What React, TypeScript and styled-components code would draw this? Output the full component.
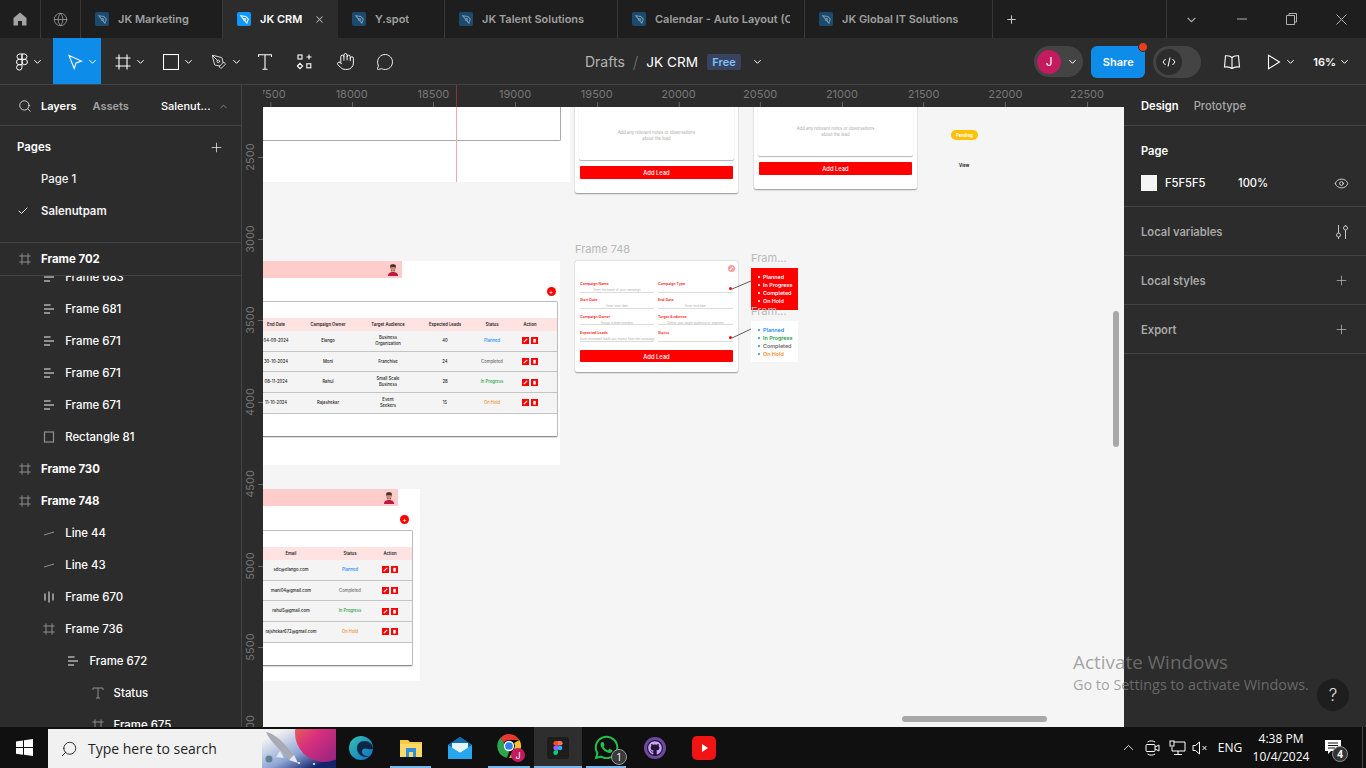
import React from 'react';
import styled, { createGlobalStyle, css } from 'styled-components';
import { ChevronUp, Check, Eye, Globe, Hand, MessageCircle, PenTool, Plus, Search, X } from 'lucide-react';
import { FaGithub, FaWhatsapp } from 'react-icons/fa';

const GlobalStyle = createGlobalStyle`
    html, body {
        margin: 0;
        padding: 0;
        width: 1366px;
        height: 768px;
        overflow: hidden;
        background: #2c2c2c;
        font-family: 'Inter', 'Liberation Sans', sans-serif;
    }
    * { box-sizing: border-box; }
`;

const AppShell = styled.div`
    position: relative;
    width: 1366px;
    height: 768px;
    display: flex;
    flex-direction: column;
    overflow: hidden;
`;

/* ---------- browser tabs ---------- */
const TabBar = styled.div`
    height: 38px;
    display: flex;
    background: #1e1e1e;
    flex-shrink: 0;
`;
const IconTab = styled.div`
    width: 40.5px;
    display: flex;
    align-items: center;
    justify-content: center;
    color: #a3a3a3;
    border-right: 1px solid #383838;
`;
const FileTab = styled.div<{ $w: number; $active?: boolean }>`
    width: ${p => p.$w}px;
    display: flex;
    align-items: center;
    padding: 0 ${p => (p.$active ? 8 : 14)}px 0 14px;
    gap: 9px;
    font-size: 11px;
    font-weight: 600;
    white-space: nowrap;
    color: ${p => (p.$active ? '#ffffff' : '#a0a0a0')};
    background: ${p => (p.$active ? '#2c2c2c' : 'transparent')};
    border-right: 1px solid ${p => (p.$active ? '#2c2c2c' : '#383838')};
`;
const TabTitle = styled.span`
    min-width: 0;
    overflow: hidden;
`;
const TabClose = styled.span`
    display: flex;
    margin-left: 3px;
    color: #b5b5b5;
`;
const TabFileBadge = styled.span<{ $active?: boolean }>`
    width: 14px;
    height: 14px;
    flex-shrink: 0;
    border-radius: 2px;
    display: flex;
    align-items: center;
    justify-content: center;
    background: ${p => (p.$active ? '#0d99ff' : '#1a4a6e')};
    color: ${p => (p.$active ? '#ffffff' : '#7b98ad')};
`;
const NewTab = styled.div`
    width: 36px;
    display: flex;
    align-items: center;
    justify-content: center;
    color: #c8c8c8;
`;
const WindowControls = styled.div`
    margin-left: auto;
    width: 200px;
    display: flex;
    border-left: 1px solid #383838;
    color: #b0b0b0;
`;
const WindowButton = styled.div`
    width: 50px;
    display: flex;
    align-items: center;
    justify-content: center;
`;

/* ---------- figma toolbar ---------- */
const ToolBar = styled.div`
    height: 47px;
    display: flex;
    align-items: stretch;
    background: #2c2c2c;
    border-bottom: 1px solid #444444;
    color: #ffffff;
    flex-shrink: 0;
`;
const ToolButton = styled.div<{ $w?: number; $active?: boolean; $plain?: boolean }>`
    width: ${p => p.$w ?? 48}px;
    display: flex;
    align-items: center;
    gap: 5px;
    padding-top: 1px;
    padding-left: ${p => (p.$plain ? 0 : 14)}px;
    justify-content: ${p => (p.$plain ? 'center' : 'flex-start')};
    background: ${p => (p.$active ? '#0d8ce9' : 'transparent')};
`;
const LogoButton = styled(ToolButton)`
    padding-left: 16px;
`;
const TitleGroup = styled.div`
    margin-left: 180px;
    padding-top: 1px;
    display: flex;
    align-items: center;
    font-size: 14px;
`;
const Crumb = styled.span`
    color: #b3b3b3;
`;
const CrumbSlash = styled.span`
    color: #6e6e6e;
    margin: 0 8px 0 8px;
    font-weight: 300;
    font-size: 16px;
`;
const FileTitle = styled.span`
    font-size: 13.6px;
`;
const FreeBadge = styled.span`
    margin-left: 9px;
    margin-right: 12px;
    width: 34px;
    height: 16px;
    border-radius: 2px;
    background: #394360;
    color: #7cc4f8;
    font-size: 11px;
    font-weight: 600;
    display: flex;
    align-items: center;
    justify-content: center;
`;
const RightTools = styled.div`
    margin-left: auto;
    padding: 1px 17px 0 0;
    display: flex;
    align-items: center;
`;
const UserPill = styled.div`
    width: 49px;
    height: 31px;
    border-radius: 16px;
    background: #444444;
    display: flex;
    align-items: center;
    padding-left: 3px;
    gap: 7px;
`;
const Avatar = styled.span`
    width: 24px;
    height: 24px;
    border-radius: 50%;
    background: #c41a5e;
    font-size: 12px;
    display: flex;
    align-items: center;
    justify-content: center;
`;
const ShareButton = styled.div`
    position: relative;
    margin-left: 8px;
    width: 54px;
    height: 32px;
    border-radius: 6px;
    background: #0d8ce9;
    font-size: 11px;
    font-weight: 600;
    display: flex;
    align-items: center;
    justify-content: center;
`;
const ShareDot = styled.span`
    position: absolute;
    top: -4px;
    right: -3px;
    width: 10px;
    height: 10px;
    border-radius: 50%;
    background: #e8401c;
    border: 1px solid #2c2c2c;
`;
const DevToggle = styled.div`
    margin-left: 8px;
    width: 48px;
    height: 32px;
    border-radius: 16px;
    background: #444444;
    padding: 3px;
`;
const DevKnob = styled.div`
    width: 26px;
    height: 26px;
    border-radius: 50%;
    background: #2c2c2c;
    display: flex;
    align-items: center;
    justify-content: center;
`;
const BookSlot = styled.div`
    display: flex;
    margin-left: 22px;
`;
const PlaySlot = styled.div`
    display: flex;
    align-items: center;
    gap: 5px;
    margin-left: 26px;
`;
const ZoomLabel = styled.div`
    display: flex;
    align-items: center;
    gap: 4px;
    margin-left: 18px;
    font-size: 11px;
    font-weight: 600;
`;

/* ---------- main area ---------- */
const MainRow = styled.div`
    flex: 1;
    min-height: 0;
    display: flex;
`;
const SideBar = styled.aside`
    width: 242px;
    flex-shrink: 0;
    background: #2c2c2c;
    border-right: 1px solid #444444;
    color: #ffffff;
    display: flex;
    flex-direction: column;
    font-size: 11.4px;
    overflow: hidden;
`;
const SideTabs = styled.div`
    height: 41px;
    flex-shrink: 0;
    display: flex;
    align-items: center;
    padding: 2px 0 0 18px;
    border-bottom: 1px solid #444444;
    font-size: 11px;
    font-weight: 600;
    color: #ffffff;
`;
const SideTabActive = styled.span`
    margin-left: 9px;
`;
const SideTabMuted = styled.span`
    margin-left: 16px;
    color: #a3a3a3;
`;
const FileName = styled.span`
    margin-left: 32px;
    font-weight: 500;
`;
const FileChevron = styled(ChevronUp)`
    margin-left: 8px;
    color: #8a8a8a;
`;
const PagesSection = styled.div`
    height: 117px;
    flex-shrink: 0;
    border-bottom: 1px solid #444444;
`;
const PagesHead = styled.div`
    height: 37px;
    display: flex;
    align-items: center;
    justify-content: space-between;
    padding: 5px 17px 0 17px;
    font-weight: 600;
`;
const PageRow = styled.div<{ $current?: boolean }>`
    height: 32px;
    display: flex;
    align-items: center;
    padding-left: 41px;
    position: relative;
    font-weight: ${p => (p.$current ? 600 : 500)};
    color: #f2f2f2;
`;
const PageCheck = styled.span`
    position: absolute;
    left: 17px;
    top: 10px;
    display: flex;
`;
const StickyLayer = styled.div`
    height: 33px;
    flex-shrink: 0;
    border-bottom: 1px solid #444444;
    background: #2c2c2c;
    display: flex;
    align-items: center;
    padding-left: 19px;
    gap: 10px;
    font-weight: 700;
    position: relative;
    z-index: 1;
`;
const LayerList = styled.div`
    flex: 1;
    min-height: 0;
    overflow: hidden;
`;
const LayerScroll = styled.div`
    margin-top: -15px;
`;
const LayerRow = styled.div<{ $level: number; $strong?: boolean }>`
    height: 32px;
    display: flex;
    align-items: center;
    gap: 10px;
    padding-left: ${p => 19 + p.$level * 24.2}px;
    font-weight: ${p => (p.$strong ? 700 : 500)};
    white-space: nowrap;
`;
const LayerGlyph = styled.span`
    width: 12px;
    height: 12px;
    flex-shrink: 0;
    color: #8f8f8f;
    display: flex;
`;

const CenterArea = styled.div`
    width: 882px;
    display: flex;
    flex-direction: column;
    background: #2c2c2c;
`;
const TopRuler = styled.div`
    height: 22px;
    flex-shrink: 0;
    padding-left: 21px;
`;
const RulerTrack = styled.div`
    position: relative;
    height: 100%;
    overflow: hidden;
`;
const RulerLabel = styled.span<{ $x: number }>`
    position: absolute;
    left: ${p => p.$x}px;
    top: 2px;
    transform: translateX(-50%);
    font-size: 11px;
    color: #777777;
    &::after {
        content: '';
        position: absolute;
        left: 50%;
        top: 15px;
        width: 1px;
        height: 5px;
        background: #666666;
    }
`;
const RulerMark = styled.span`
    position: absolute;
    left: 193px;
    top: 0;
    bottom: 0;
    width: 1px;
    background: #7d3a36;
`;
const CanvasRow = styled.div`
    flex: 1;
    min-height: 0;
    display: flex;
`;
const LeftRuler = styled.div`
    position: relative;
    width: 21px;
    flex-shrink: 0;
    overflow: hidden;
`;
const SideRulerLabel = styled.span<{ $y: number }>`
    position: absolute;
    top: ${p => p.$y}px;
    left: 8px;
    transform: translate(-50%, -50%) rotate(-90deg);
    font-size: 11px;
    color: #777777;
`;
const SideRulerTick = styled.span<{ $y: number }>`
    position: absolute;
    top: ${p => p.$y}px;
    right: 0;
    width: 5px;
    height: 1px;
    background: #666666;
`;
const Canvas = styled.div`
    position: relative;
    flex: 1;
    background: #f5f5f5;
    overflow: hidden;
`;

const placed = css<{ $x: number; $y: number }>`
    position: absolute;
    left: ${p => p.$x}px;
    top: ${p => p.$y}px;
`;

const RedGuide = styled.div`
    position: absolute;
    left: 193px;
    top: 0;
    width: 1px;
    height: 75px;
    background: #f0a9a6;
`;
const WhiteFrame = styled.div<{ $x: number; $y: number; $w: number; $h: number }>`
    ${placed};
    width: ${p => p.$w}px;
    height: ${p => p.$h}px;
    background: #ffffff;
    display: flex;
    flex-direction: column;
`;
const ClippedBox = styled.div`
    height: 34px;
    margin-right: 9px;
    border: 1px solid #a8a8a8;
    border-top: none;
    border-left: none;
    border-radius: 0 0 2px 0;
`;
const PinkBar = styled.div<{ $w: number }>`
    width: ${p => p.$w}px;
    height: 17px;
    flex-shrink: 0;
    background: #ffcccc;
    display: flex;
    align-items: center;
    justify-content: flex-end;
    padding-right: 3px;
`;
const PlusRow = styled.div<{ $h: number; $pad: number }>`
    height: ${p => p.$h}px;
    flex-shrink: 0;
    display: flex;
    align-items: center;
    justify-content: flex-end;
    padding: 3px ${p => p.$pad}px 0 0;
`;
const RedPlus = styled.span`
    width: 9px;
    height: 9px;
    border-radius: 50%;
    background: #ff0000;
    color: #ffffff;
    font-size: 7px;
    line-height: 9px;
    text-align: center;
`;
const TableBox = styled.div<{ $right: number }>`
    height: 136px;
    margin-right: ${p => p.$right}px;
    padding-top: 16px;
    border: 1px solid #bdbdbd;
    border-left: none;
    border-bottom: 1px solid #8f8f8f;
    border-radius: 0 2px 2px 0;
    flex-shrink: 0;
    box-shadow: 0 1px 1px rgba(0, 0, 0, 0.15);
`;
const TableRow = styled.div<{ $cols: string; $head?: boolean }>`
    display: grid;
    grid-template-columns: ${p => p.$cols};
    height: ${p => (p.$head ? 13 : 20.7)}px;
    background: ${p => (p.$head ? '#ffe2e2' : '#f4f4f4')};
    border-bottom: ${p => (p.$head ? 'none' : '1px solid #c4c4c4')};
    font-size: 4.2px;
    font-weight: ${p => (p.$head ? 600 : 500)};
    color: #1c1c1c;
`;
const TableCell = styled.div<{ $color?: string }>`
    display: flex;
    align-items: center;
    justify-content: center;
    text-align: center;
    line-height: 6px;
    white-space: nowrap;
    color: ${p => p.$color ?? 'inherit'};
`;
const ActionGroup = styled.div`
    display: flex;
    align-items: center;
    justify-content: center;
    gap: 2px;
`;
const ActionButton = styled.span`
    width: 7px;
    height: 7px;
    background: #ff0000;
    color: #ffffff;
    display: flex;
    align-items: center;
    justify-content: center;
`;

const LeadCard = styled.div<{ $x: number; $y: number; $h: number }>`
    ${placed};
    width: 163px;
    height: ${p => p.$h}px;
    background: #ffffff;
    border-radius: 2px;
    box-shadow: 0 0.5px 1.5px rgba(0, 0, 0, 0.4);
    padding: 0 4px 0 4px;
    display: flex;
    flex-direction: column;
`;
const NotesArea = styled.div<{ $h: number }>`
    height: ${p => p.$h}px;
    flex-shrink: 0;
    border-radius: 2px;
    box-shadow: 0 0.5px 1px rgba(0, 0, 0, 0.3);
    display: flex;
    align-items: center;
    justify-content: center;
    text-align: center;
    font-size: 4.2px;
    line-height: 5.5px;
    color: #a9a9a9;
    padding-top: 14px;
`;
const RedButton = styled.div<{ $gap: number }>`
    margin: ${p => p.$gap}px 1px 0 1px;
    height: 12.5px;
    flex-shrink: 0;
    border-radius: 1px;
    background: #ff0000;
    color: #ffffff;
    font-size: 5.8px;
    font-weight: 500;
    display: flex;
    align-items: center;
    justify-content: center;
`;
const PendingPill = styled.div<{ $x: number; $y: number }>`
    ${placed};
    width: 27px;
    height: 10px;
    border-radius: 5px;
    background: #ffc107;
    color: #ffffff;
    font-size: 4.2px;
    font-weight: 700;
    display: flex;
    align-items: center;
    justify-content: center;
`;
const TinyLink = styled.div<{ $x: number; $y: number }>`
    ${placed};
    font-size: 4.2px;
    font-weight: 700;
    color: #222222;
`;
const FrameLabel = styled.div<{ $x: number; $y: number }>`
    ${placed};
    font-size: 11px;
    color: #b9b9b9;
    white-space: nowrap;
`;
const FormCard = styled(LeadCard)`
    padding: 15.3px 4px 0 4px;
`;
const PencilBadge = styled.span`
    position: absolute;
    top: 3.5px;
    right: 3px;
    width: 7px;
    height: 7px;
    border-radius: 50%;
    background: #ff9a9a;
    display: flex;
    align-items: center;
    justify-content: center;
`;
const FieldGrid = styled.div`
    display: grid;
    grid-template-columns: 74px 75px;
    column-gap: 4px;
    margin-left: 1px;
`;
const Field = styled.div`
    height: 16.4px;
    padding-top: 5.7px;
    border-bottom: 1px solid #dcdcdc;
    position: relative;
`;
const FieldLabel = styled.div`
    font-size: 3.6px;
    line-height: 4px;
    font-weight: 600;
    color: #ff2a2a;
`;
const FieldHint = styled.div`
    margin-top: 2px;
    font-size: 3px;
    line-height: 4px;
    color: #b0b0b0;
    text-align: center;
    white-space: nowrap;
`;
const FieldDot = styled.span`
    position: absolute;
    right: 1px;
    bottom: 1.5px;
    width: 3.5px;
    height: 3.5px;
    border-radius: 50%;
    background: #ff0000;
`;
const StatusBox = styled.ul<{ $x: number; $y: number; $h: number; $red?: boolean }>`
    ${placed};
    margin: 0;
    width: 46.5px;
    height: ${p => p.$h}px;
    padding: 5px 0 0 12px;
    list-style: none;
    background: ${p => (p.$red ? '#ff0000' : '#ffffff')};
    font-size: 5.4px;
    font-weight: 600;
`;
const StatusItem = styled.li<{ $color: string; $dot: string }>`
    position: relative;
    height: 8px;
    line-height: 8px;
    color: ${p => p.$color};
    white-space: nowrap;
    &::before {
        content: '';
        position: absolute;
        left: -5px;
        top: 3px;
        width: 2px;
        height: 2px;
        border-radius: 50%;
        background: ${p => p.$dot};
    }
`;
const Connector = styled.svg`
    position: absolute;
    left: 0;
    top: 0;
    pointer-events: none;
`;
const ScrollThumbH = styled.div`
    position: absolute;
    left: 639px;
    top: 609px;
    width: 145px;
    height: 6px;
    border-radius: 3px;
    background: #a8a8a8;
`;
const ScrollThumbV = styled.div`
    position: absolute;
    left: 850px;
    top: 204px;
    width: 6px;
    height: 136px;
    border-radius: 3px;
    background: #a8a8a8;
`;

/* ---------- right panel ---------- */
const RightPanel = styled.aside`
    position: relative;
    flex: 1;
    background: #2c2c2c;
    color: #ffffff;
    font-size: 11.2px;
`;
const PanelTabs = styled.div`
    height: 41px;
    display: flex;
    align-items: center;
    gap: 15px;
    padding: 2px 0 0 17px;
    border-bottom: 1px solid #444444;
    font-weight: 600;
`;
const PanelTabMuted = styled.span`
    color: #a8a8a8;
    font-weight: 500;
`;
const PageSection = styled.div`
    height: 81px;
    padding: 17px 17px 0 17px;
    border-bottom: 1px solid #444444;
`;
const PageTitle = styled.div`
    font-weight: 600;
    height: 16px;
    line-height: 16px;
`;
const FillRow = styled.div`
    margin-top: 16px;
    display: flex;
    align-items: center;
`;
const Swatch = styled.span`
    width: 16px;
    height: 16px;
    background: #f5f5f5;
`;
const HexValue = styled.span`
    margin-left: 8px;
    width: 73px;
    font-weight: 500;
`;
const PercentValue = styled.span`
    font-weight: 500;
`;
const EyeSlot = styled.span`
    margin-left: auto;
    display: flex;
    color: #f0f0f0;
`;
const PanelSection = styled.div`
    height: 49px;
    display: flex;
    align-items: center;
    justify-content: space-between;
    padding: 1px 17px 0 17px;
    border-bottom: 1px solid #444444;
    color: #a8a8a8;
    font-weight: 600;
`;
const PanelGlyph = styled.span`
    display: flex;
    color: #c4c4c4;
`;
const HelpButton = styled.div`
    position: absolute;
    left: 193px;
    top: 594px;
    width: 32px;
    height: 32px;
    border-radius: 50%;
    background: #1e1e1e;
    color: #e0e0e0;
    font-size: 17px;
    font-weight: 300;
    display: flex;
    align-items: center;
    justify-content: center;
`;
const ActivateNote = styled.div`
    position: absolute;
    left: 1073px;
    top: 650px;
    font-family: 'Open Sans', 'Noto Sans', sans-serif;
    color: rgba(130, 130, 130, 0.72);
    pointer-events: none;
    white-space: nowrap;
`;
const ActivateTitle = styled.div`
    font-size: 18.9px;
    line-height: 24px;
`;
const ActivateText = styled.div`
    font-size: 14.4px;
    line-height: 22px;
`;

/* ---------- windows taskbar ---------- */
const TaskBar = styled.div`
    height: 41px;
    flex-shrink: 0;
    display: flex;
    background: #101010;
    color: #ffffff;
    font-family: 'Open Sans', 'Noto Sans', sans-serif;
`;
const StartButton = styled.div`
    width: 48px;
    display: flex;
    align-items: center;
    justify-content: center;
`;
const SearchBox = styled.div`
    position: relative;
    width: 288px;
    margin-top: 2px;
    background: #f1f1f1;
    color: #1f1f1f;
    display: flex;
    align-items: center;
    padding-left: 12px;
    gap: 10px;
    font-size: 14px;
    overflow: hidden;
    white-space: nowrap;
`;
const MirroredSearch = styled(Search)`
    transform: scaleX(-1);
`;
const SearchArt = styled.svg`
    position: absolute;
    right: 0;
    top: 0;
`;
const AppSlot = styled.div<{ $w: number; $open?: boolean; $active?: boolean }>`
    position: relative;
    width: ${p => p.$w}px;
    display: flex;
    align-items: center;
    justify-content: center;
    background: ${p => (p.$active ? '#2e2e2e' : 'transparent')};
    &::after {
        content: '';
        display: ${p => (p.$open ? 'block' : 'none')};
        position: absolute;
        left: ${p => (p.$active ? 0 : 4)}px;
        right: ${p => (p.$active ? 0 : 4)}px;
        bottom: 0;
        height: 2px;
        background: #76b9ed;
    }
`;
const CountBadge = styled.span`
    position: absolute;
    right: 3px;
    bottom: 3px;
    width: 16px;
    height: 16px;
    border-radius: 50%;
    background: #3a3a3a;
    border: 1px solid #9a9a9a;
    font-size: 10px;
    line-height: 14px;
    text-align: center;
`;
const Tray = styled.div`
    margin-left: auto;
    margin-right: 3px;
    padding-right: 6px;
    display: flex;
    align-items: center;
    border-right: 1px solid #4a4a4a;
`;
const TraySlot = styled.div<{ $w: number }>`
    width: ${p => p.$w}px;
    display: flex;
    align-items: center;
    justify-content: center;
    font-size: 12px;
`;
const ClockBlock = styled.div`
    width: 58px;
    text-align: center;
    font-size: 12px;
    line-height: 18px;
    white-space: nowrap;
`;
const NotifySlot = styled.div`
    position: relative;
    width: 46px;
    height: 41px;
    display: flex;
    align-items: center;
    justify-content: center;
`;
const NotifyCount = styled.span`
    position: absolute;
    left: 22px;
    top: 19px;
    width: 16px;
    height: 16px;
    border-radius: 50%;
    background: #333333;
    border: 1px solid #8f8f8f;
    font-size: 10px;
    font-weight: 700;
    line-height: 14px;
    text-align: center;
`;

/* ---------- drawings ---------- */
const FileIcon = () => (
    <svg width="11" height="11" viewBox="0 0 12 12" fill="none" stroke="currentColor" strokeWidth="1.1">
        <path d="M2 2l5.5.8 2.7 2.7-1.6 4.5L2 2z" />
        <circle cx="6" cy="6" r="1.1" />
    </svg>
);
const HomeIcon = () => (
    <svg width="16" height="16" viewBox="0 0 16 16" fill="currentColor">
        <path d="M8 1.5L14.5 7v7.5H10V10H6v4.5H1.5V7L8 1.5z" />
    </svg>
);
const Chevron = ({ size = 9 }: { size?: number }) => (
    <svg width={size} height={size} viewBox="0 0 10 10" fill="none" stroke="currentColor" strokeWidth="1.1">
        <path d="M1.5 3.5L5 7l3.5-3.5" />
    </svg>
);
const FigmaMark = () => (
    <svg width="12" height="18" viewBox="0 0 12 18" fill="none" stroke="#ffffff" strokeWidth="1">
        <path d="M6 1H3.2a2.7 2.7 0 000 5.3H6V1zM6 1h2.8a2.7 2.7 0 010 5.3H6V1zM6 6.3H3.2a2.7 2.7 0 000 5.4H6V6.3zM6 11.7H3.2A2.7 2.7 0 106 14.4v-2.7z" />
        <circle cx="8.7" cy="9" r="2.7" />
    </svg>
);
const ArrowTool = () => (
    <svg width="16" height="16" viewBox="0 0 16 16" fill="none" stroke="#ffffff" strokeWidth="1.1">
        <path d="M2 1.5l12.5 5.6-5.4 1.8-1.9 5.6L2 1.5z" />
    </svg>
);
const FrameIcon = ({ size = 16 }: { size?: number }) => (
    <svg width={size} height={size} viewBox="0 0 16 16" fill="none" stroke="currentColor" strokeWidth={size < 14 ? 1.3 : 1.1}>
        <path d="M4 0.5v15M12 0.5v15M0.5 4h15M0.5 12h15" />
    </svg>
);
const RectTool = () => (
    <svg width="16" height="16" viewBox="0 0 16 16" fill="none" stroke="#ffffff" strokeWidth="1.1">
        <rect x="0.5" y="0.5" width="15" height="15" />
    </svg>
);
const TextTool = () => (
    <svg width="14" height="16" viewBox="0 0 14 16" fill="none" stroke="#ffffff" strokeWidth="1.1">
        <path d="M0.5 3V0.8h13V3M7 0.8v14.500M4.500 15.300h5" />
    </svg>
);
const ComponentsTool = () => (
    <svg width="16" height="16" viewBox="0 0 16 16" fill="none" stroke="#ffffff" strokeWidth="1.1">
        <rect x="1" y="1" width="4" height="4" />
        <path d="M12 0.5v5M9.5 3h5" />
        <path d="M3 9.3L5.6 12 3 14.7 0.4 12z" />
        <rect x="9.8" y="9.8" width="4" height="4" />
    </svg>
);
const CodeGlyph = () => (
    <svg width="14" height="12" viewBox="0 0 14 12" fill="none" stroke="#ffffff" strokeWidth="1">
        <path d="M3.5 3L1 6l2.5 3M10.5 3L13 6l-2.5 3M8 1.5L6 10.5" />
    </svg>
);
const BookIcon = () => (
    <svg width="18" height="16" viewBox="0 0 18 16" fill="none" stroke="#ffffff" strokeWidth="1.1">
        <path d="M9 3.5C7.5 2 5 1.500 2.500 1.800L1.500 13c2.700-.4 5.600 0 7.500 1.500 1.900-1.500 4.800-1.900 7.500-1.500l-1-11.200C13 1.500 10.500 2 9 3.500zM9 3.500v11" />
    </svg>
);
const PlayIcon = () => (
    <svg width="14" height="16" viewBox="0 0 14 16" fill="none" stroke="#ffffff" strokeWidth="1.1">
        <path d="M1.5 1.200L12.500 8 1.500 14.800V1.200z" />
    </svg>
);
const AutoLayoutGlyph = () => (
    <svg width="12" height="12" viewBox="0 0 12 12" fill="currentColor">
        <rect x="1" y="1" width="6.500" height="2" />
        <rect x="1" y="5" width="10" height="2" />
        <rect x="1" y="9" width="6" height="2" />
    </svg>
);
const ColumnsGlyph = () => (
    <svg width="12" height="12" viewBox="0 0 12 12" fill="currentColor">
        <rect x="1" y="2.500" width="2" height="7" />
        <rect x="5" y="0.500" width="2" height="11" />
        <rect x="9" y="2.500" width="2" height="7" />
    </svg>
);
const RectGlyph = () => (
    <svg width="12" height="12" viewBox="0 0 12 12" fill="none" stroke="currentColor" strokeWidth="1.2">
        <rect x="1.500" y="1" width="9" height="10" />
    </svg>
);
const LineGlyph = () => (
    <svg width="12" height="12" viewBox="0 0 12 12" fill="none" stroke="currentColor" strokeWidth="1">
        <path d="M1 8l10-3" />
    </svg>
);
const TextGlyph = () => (
    <svg width="12" height="12" viewBox="0 0 12 12" fill="none" stroke="currentColor" strokeWidth="1">
        <path d="M1 3V1h10v2M6 1v10M4 11h4" />
    </svg>
);
const SlidersGlyph = () => (
    <svg width="14" height="16" viewBox="0 0 14 16" fill="none" stroke="currentColor" strokeWidth="1">
        <path d="M3.500 1v8M3.500 13v2M10.500 1v1M10.500 6v9" />
        <circle cx="3.500" cy="11" r="2" />
        <circle cx="10.500" cy="4" r="2" />
    </svg>
);
const PersonAvatar = () => (
    <svg width="12" height="13" viewBox="0 0 12 13">
        <path d="M1 13c0-3 2-4 5-4s5 1 5 4H1z" fill="#c2183c" />
        <circle cx="6" cy="5.500" r="2.700" fill="#c98f74" />
        <path d="M3.200 4.800V2.400C4 1 8 1 8.800 2.400v2.400C7.500 3.600 4.500 3.600 3.200 4.800z" fill="#4a2d26" />
        <path d="M4 7c.8 1.500 3.200 1.500 4 0v1.200H4z" fill="#4a2d26" />
    </svg>
);
const PenMini = () => (
    <svg width="5" height="5" viewBox="0 0 6 6" stroke="#ffffff" strokeWidth="1.300">
        <path d="M1 5l4-4" />
    </svg>
);
const BinMini = () => (
    <svg width="5" height="5" viewBox="0 0 6 6" fill="#ffffff">
        <rect x="1.500" y="1" width="3" height="4.500" />
    </svg>
);
const WindowsLogo = () => (
    <svg width="17" height="17" viewBox="0 0 17 17" fill="#ffffff">
        <path d="M0 2.400l7-1v6.700H0zM8 1.200L17 0v8.100H8zM0 9h7v6.700l-7-1zM8 9h9v8l-9-1.200z" />
    </svg>
);
const RocketArt = () => (
    <SearchArt width="74" height="39" viewBox="0 0 74 39">
        <defs>
            <linearGradient id="planetFill" x1="0" y1="0" x2="1" y2="1">
                <stop offset="0" stopColor="#f08a3c" />
                <stop offset="0.45" stopColor="#d8307c" />
                <stop offset="1" stopColor="#7a1f86" />
            </linearGradient>
            <linearGradient id="skyFill" x1="0" y1="0" x2="1" y2="1">
                <stop offset="0.15" stopColor="#f1f1f1" />
                <stop offset="0.55" stopColor="#8fa6d6" />
                <stop offset="0.85" stopColor="#14246a" />
            </linearGradient>
        </defs>
        <rect width="74" height="39" fill="url(#skyFill)" />
        <circle cx="62" cy="4" r="29" fill="url(#planetFill)" />
        <path d="M4 3c8 1 18 10 29 25l-5 3C18 21 7 11 4 3z" fill="#a8aab4" />
        <path d="M27 31l9 3-4-8zM18 22l-4 6 8 1z" fill="#e6e8f0" />
        <circle cx="7" cy="30" r="3.500" fill="#5d8296" />
        <circle cx="37" cy="34" r="1" fill="#ffffff" />
        <circle cx="52" cy="35" r="1" fill="#ffffff" />
    </SearchArt>
);
const EdgeIcon = () => (
    <svg width="24" height="24" viewBox="0 0 24 24">
        <defs>
            <linearGradient id="edgeFill" x1="0" y1="0" x2="1" y2="1">
                <stop offset="0" stopColor="#35c1b0" />
                <stop offset="1" stopColor="#0f6fc6" />
            </linearGradient>
        </defs>
        <circle cx="12" cy="12" r="12" fill="url(#edgeFill)" />
        <path d="M24 13c0-5-4-8-8.500-8C11 5 8 8 8 12c0 5 4 9 9 9 1.500 0 2.500-.3 3.500-1-5 1-7.500-2-7.500-4.500 0-1.500 1-3 3.500-3 2.500 0 3.500 1.500 7.500.5z" fill="#0b1c3a" opacity="0.9" />
    </svg>
);
const FolderIcon = () => (
    <svg width="22" height="20" viewBox="0 0 22 20">
        <path d="M0 2h8l2 2h12v15H0z" fill="#f6c944" />
        <rect x="0" y="6" width="22" height="13" fill="#fbd968" />
        <rect x="6" y="10" width="10" height="9" fill="#2f8fdc" />
        <rect x="9" y="14" width="4" height="5" fill="#fbd968" />
    </svg>
);
const MailIcon = () => (
    <svg width="24" height="22" viewBox="0 0 24 22">
        <path d="M12 0l12 8v14H0V8z" fill="#1c8fdc" />
        <path d="M0 8l12 8 12-8-12-8z" fill="#0f6cb0" />
        <path d="M4 6h16v5l-8 5-8-5z" fill="#e8f4fc" />
        <path d="M0 8v14h24V8l-12 8z" fill="#27a8ee" />
    </svg>
);
const ChromeIcon = () => (
    <svg width="32" height="28" viewBox="-4 0 32 28">
        <path d="M12 0a12 12 0 0110.400 6H12a6 6 0 00-5.200 3L3.500 3.800A12 12 0 0112 0z" fill="#e6392e" />
        <path d="M22.400 6A12 12 0 0112 24l5.200-9a6 6 0 000-6z" fill="#fbc02d" />
        <path d="M3.500 3.800L6.800 9 12 18l-2 5.800A12 12 0 013.500 3.800z" fill="#2ea44f" />
        <circle cx="12" cy="12" r="4.500" fill="#2f80ed" stroke="#ffffff" strokeWidth="1.300" />
        <circle cx="21" cy="21" r="7" fill="#c41a5e" />
        <text x="21" y="24.500" textAnchor="middle" fontSize="9" fill="#ffffff" fontFamily="Inter, sans-serif">J</text>
    </svg>
);
const FigmaApp = () => (
    <svg width="22" height="22" viewBox="0 0 22 22">
        <rect width="22" height="22" rx="3" fill="#1d1d1d" />
        <circle cx="13" cy="11" r="2.300" fill="#1abcfe" />
        <path d="M11 4H8.700a2.300 2.300 0 000 4.600H11z" fill="#f24e1e" />
        <path d="M11 4h2.300a2.300 2.300 0 010 4.600H11z" fill="#ff7262" />
        <path d="M11 8.600H8.700a2.300 2.300 0 000 4.700H11z" fill="#a259ff" />
        <path d="M11 13.300H8.700A2.350 2.350 0 1011 15.600z" fill="#0acf83" />
    </svg>
);
const GithubIcon = () => (
    <svg width="22" height="22" viewBox="0 0 22 22">
        <circle cx="11" cy="11" r="11" fill="#6e4a9e" />
        <circle cx="11" cy="11" r="8" fill="#24123c" />
    </svg>
);
const GithubBadge = styled.span`
    position: relative;
    display: flex;
    align-items: center;
    justify-content: center;
    color: #c8a8f0;
    svg:last-child {
        position: absolute;
    }
`;
const YoutubeIcon = () => (
    <svg width="24" height="24" viewBox="0 0 24 24">
        <rect width="24" height="24" rx="5" fill="#f01414" />
        <path d="M10 8l6 4-6 4z" fill="#ffffff" />
    </svg>
);
const CameraTray = () => (
    <svg width="16" height="18" viewBox="0 0 16 18" fill="none" stroke="#ffffff" strokeWidth="1">
        <rect x="1" y="5.500" width="9" height="7" rx="1" />
        <path d="M10 8l4-2v6l-4-2M2.500 3C4.500 1.500 8 1.500 10 3M2.500 15c2 1.500 5.500 1.500 7.500 0" />
    </svg>
);
const NetworkTray = () => (
    <svg width="17" height="16" viewBox="0 0 17 16" fill="none" stroke="#ffffff" strokeWidth="1">
        <path d="M5 2h11v9H3V7M9 11v3M5 14.500h8" />
        <rect x="1" y="1" width="4" height="5" />
    </svg>
);
const VolumeTray = () => (
    <svg width="16" height="14" viewBox="0 0 16 14" fill="none" stroke="#ffffff" strokeWidth="1">
        <path d="M1 4.500h2.500L7.500 1v12L3.500 9.500H1zM10.500 5l4 4M14.500 5l-4 4" />
    </svg>
);
const NotifyIcon = () => (
    <svg width="16" height="15" viewBox="0 0 16 15" fill="#ffffff">
        <path d="M0 0h16v11H6l-3 3v-3H0z" />
        <path d="M3 3h10M3 5.500h10M3 8h7" stroke="#101010" strokeWidth="1" />
    </svg>
);

/* ---------- data ---------- */
const tabs = [
    { name: 'JK Marketing', w: 142 },
    { name: 'JK CRM', w: 115, active: true },
    { name: 'Y.spot', w: 107 },
    { name: 'JK Talent Solutions', w: 173 },
    { name: 'Calendar - Auto Layout (C', w: 187 },
    { name: 'JK Global IT Solutions', w: 188 },
];

type LayerKind = 'frame' | 'auto' | 'rect' | 'line' | 'cols' | 'text';
const layers: { name: string; level: number; kind: LayerKind; strong?: boolean }[] = [
    { name: 'Frame 683', level: 1, kind: 'auto' },
    { name: 'Frame 681', level: 1, kind: 'auto' },
    { name: 'Frame 671', level: 1, kind: 'auto' },
    { name: 'Frame 671', level: 1, kind: 'auto' },
    { name: 'Frame 671', level: 1, kind: 'auto' },
    { name: 'Rectangle 81', level: 1, kind: 'rect' },
    { name: 'Frame 730', level: 0, kind: 'frame', strong: true },
    { name: 'Frame 748', level: 0, kind: 'frame', strong: true },
    { name: 'Line 44', level: 1, kind: 'line' },
    { name: 'Line 43', level: 1, kind: 'line' },
    { name: 'Frame 670', level: 1, kind: 'cols' },
    { name: 'Frame 736', level: 1, kind: 'frame' },
    { name: 'Frame 672', level: 2, kind: 'auto' },
    { name: 'Status', level: 3, kind: 'text' },
    { name: 'Frame 675', level: 3, kind: 'frame' },
];

const layerGlyph = (kind: LayerKind) => {
    if (kind === 'frame') return <FrameIcon size={12} />;
    if (kind === 'auto') return <AutoLayoutGlyph />;
    if (kind === 'rect') return <RectGlyph />;
    if (kind === 'line') return <LineGlyph />;
    if (kind === 'cols') return <ColumnsGlyph />;
    return <TextGlyph />;
};

const rulerX = [17500, 18000, 18500, 19000, 19500, 20000, 20500, 21000, 21500, 22000, 22500];
const rulerY = [2500, 3000, 3500, 4000, 4500, 5000, 5500, 6000];

const statusColors: Record<string, string> = {
    Planned: '#1a8cff',
    Completed: '#6b6b6b',
    'In Progress': '#25a244',
    'On Hold': '#f28c28',
};

const campaignCols = '26px 78px 42px 72px 22px 54px';
const campaignRows = [
    { end: '04-09-2024', owner: 'Elango', audience: ['Business', 'Organization'], leads: '40', status: 'Planned' },
    { end: '30-10-2024', owner: 'Moni', audience: ['Franchise'], leads: '24', status: 'Completed' },
    { end: '08-11-2024', owner: 'Rahul', audience: ['Small Scale', 'Business'], leads: '28', status: 'In Progress' },
    { end: '11-10-2024', owner: 'Rajashekar', audience: ['Event', 'Seekers'], leads: '15', status: 'On Hold' },
];

const leadCols = '56px 62px 18px 1fr';
const leadRows = [
    { email: 'sdc@elango.com', status: 'Planned' },
    { email: 'mani04@gmail.com', status: 'Completed' },
    { email: 'rahul5@gmail.com', status: 'In Progress' },
    { email: 'rajshekar672@gmail.com', status: 'On Hold' },
];

const fields = [
    { label: 'Campaign Name', hint: 'Enter the name of your campaign' },
    { label: 'Campaign Type', hint: '', dot: true },
    { label: 'Start Date', hint: 'Enter start date' },
    { label: 'End Date', hint: 'Enter end date' },
    { label: 'Campaign Owner', hint: 'Assign a team member' },
    { label: 'Target Audience', hint: 'Define your target audience or segment' },
    { label: 'Expected Leads', hint: 'Enter estimated leads you expect from the campaign' },
    { label: 'Status', hint: '', dot: true },
];

const Actions = () => (
    <ActionGroup>
        <ActionButton>
            <PenMini />
        </ActionButton>
        <ActionButton>
            <BinMini />
        </ActionButton>
    </ActionGroup>
);

const App = () => {
    return (
        <AppShell>
            <GlobalStyle />
            <TabBar>
                <IconTab>
                    <HomeIcon />
                </IconTab>
                <IconTab>
                    <Globe size={15} strokeWidth={1.2} />
                </IconTab>
                {tabs.map(t => (
                    <FileTab key={t.name} $w={t.w} $active={t.active}>
                        <TabFileBadge $active={t.active}>
                            <FileIcon />
                        </TabFileBadge>
                        <TabTitle>{t.name}</TabTitle>
                        {t.active && (
                            <TabClose>
                                <X size={11} strokeWidth={2.2} />
                            </TabClose>
                        )}
                    </FileTab>
                ))}
                <NewTab>
                    <Plus size={13} strokeWidth={2} />
                </NewTab>
                <WindowControls>
                    <WindowButton>
                        <Chevron size={11} />
                    </WindowButton>
                    <WindowButton>
                        <svg width="10" height="2" viewBox="0 0 10 2" stroke="currentColor">
                            <path d="M0 1h10" />
                        </svg>
                    </WindowButton>
                    <WindowButton>
                        <svg width="11" height="12" viewBox="0 0 11 12" fill="none" stroke="currentColor">
                            <path d="M3 2.500V.5h7.500v8.500H8.500M.5 2.500h8v9h-8z" />
                        </svg>
                    </WindowButton>
                    <WindowButton>
                        <svg width="11" height="11" viewBox="0 0 11 11" stroke="currentColor">
                            <path d="M.5.5l10 10M10.500.5l-10 10" />
                        </svg>
                    </WindowButton>
                </WindowControls>
            </TabBar>

            <ToolBar>
                <LogoButton $w={53}>
                    <FigmaMark />
                    <Chevron />
                </LogoButton>
                <ToolButton $active>
                    <ArrowTool />
                    <Chevron />
                </ToolButton>
                <ToolButton>
                    <FrameIcon />
                    <Chevron />
                </ToolButton>
                <ToolButton>
                    <RectTool />
                    <Chevron />
                </ToolButton>
                <ToolButton>
                    <PenTool size={16} strokeWidth={1.2} />
                    <Chevron />
                </ToolButton>
                <ToolButton $w={40} $plain>
                    <TextTool />
                </ToolButton>
                <ToolButton $w={40} $plain>
                    <ComponentsTool />
                </ToolButton>
                <ToolButton $w={40} $plain>
                    <Hand size={19} strokeWidth={1.2} />
                </ToolButton>
                <ToolButton $w={40} $plain>
                    <MessageCircle size={18} strokeWidth={1.2} />
                </ToolButton>
                <TitleGroup>
                    <Crumb>Drafts</Crumb>
                    <CrumbSlash>/</CrumbSlash>
                    <FileTitle>JK CRM</FileTitle>
                    <FreeBadge>Free</FreeBadge>
                    <Chevron />
                </TitleGroup>
                <RightTools>
                    <UserPill>
                        <Avatar>J</Avatar>
                        <Chevron />
                    </UserPill>
                    <ShareButton>
                        Share
                        <ShareDot />
                    </ShareButton>
                    <DevToggle>
                        <DevKnob>
                            <CodeGlyph />
                        </DevKnob>
                    </DevToggle>
                    <BookSlot>
                        <BookIcon />
                    </BookSlot>
                    <PlaySlot>
                        <PlayIcon />
                        <Chevron />
                    </PlaySlot>
                    <ZoomLabel>
                        16%
                        <Chevron />
                    </ZoomLabel>
                </RightTools>
            </ToolBar>

            <MainRow>
                <SideBar>
                    <SideTabs>
                        <Search size={14} strokeWidth={1.3} />
                        <SideTabActive>Layers</SideTabActive>
                        <SideTabMuted>Assets</SideTabMuted>
                        <FileName>Salenut...</FileName>
                        <FileChevron size={11} />
                    </SideTabs>
                    <PagesSection>
                        <PagesHead>
                            Pages
                            <Plus size={15} strokeWidth={1.1} />
                        </PagesHead>
                        <PageRow>Page 1</PageRow>
                        <PageRow $current>
                            <PageCheck>
                                <Check size={12} strokeWidth={2} />
                            </PageCheck>
                            Salenutpam
                        </PageRow>
                    </PagesSection>
                    <StickyLayer>
                        <LayerGlyph>
                            <FrameIcon size={12} />
                        </LayerGlyph>
                        Frame 702
                    </StickyLayer>
                    <LayerList>
                        <LayerScroll>
                            {layers.map((l, i) => (
                                <LayerRow key={i} $level={l.level} $strong={l.strong}>
                                    <LayerGlyph>{layerGlyph(l.kind)}</LayerGlyph>
                                    {l.name}
                                </LayerRow>
                            ))}
                        </LayerScroll>
                    </LayerList>
                </SideBar>

                <CenterArea>
                    <TopRuler>
                        <RulerTrack>
                            {rulerX.map((v, i) => (
                                <RulerLabel key={v} $x={7 + i * 81.7}>
                                    {v}
                                </RulerLabel>
                            ))}
                            <RulerMark />
                        </RulerTrack>
                    </TopRuler>
                    <CanvasRow>
                        <LeftRuler>
                            {rulerY.map((v, i) => (
                                <React.Fragment key={v}>
                                    <SideRulerLabel $y={50 + i * 81.7}>{v}</SideRulerLabel>
                                    <SideRulerTick $y={50 + i * 81.7} />
                                </React.Fragment>
                            ))}
                        </LeftRuler>
                        <Canvas>
                            <WhiteFrame $x={0} $y={0} $w={307} $h={75}>
                                <ClippedBox />
                            </WhiteFrame>
                            <RedGuide />

                            <LeadCard $x={312} $y={-10} $h={96}>
                                <NotesArea $h={63}>
                                    Add any relevant notes or observations
                                    <br />
                                    about the lead
                                </NotesArea>
                                <RedButton $gap={6}>Add Lead</RedButton>
                            </LeadCard>
                            <LeadCard $x={491} $y={-14} $h={96}>
                                <NotesArea $h={63}>
                                    Add any relevant notes or observations
                                    <br />
                                    about the lead
                                </NotesArea>
                                <RedButton $gap={6}>Add Lead</RedButton>
                            </LeadCard>
                            <PendingPill $x={688} $y={23}>
                                Pending
                            </PendingPill>
                            <TinyLink $x={696} $y={56}>
                                View
                            </TinyLink>

                            <WhiteFrame $x={0} $y={154} $w={297} $h={204}>
                                <PinkBar $w={139}>
                                    <PersonAvatar />
                                </PinkBar>
                                <PlusRow $h={23} $pad={4.5}>
                                    <RedPlus>+</RedPlus>
                                </PlusRow>
                                <TableBox $right={2.5}>
                                    <TableRow $cols={campaignCols} $head>
                                        <TableCell>End Date</TableCell>
                                        <TableCell>Campaign Owner</TableCell>
                                        <TableCell>Target Audience</TableCell>
                                        <TableCell>Expected Leads</TableCell>
                                        <TableCell>Status</TableCell>
                                        <TableCell>Action</TableCell>
                                    </TableRow>
                                    {campaignRows.map(r => (
                                        <TableRow key={r.end} $cols={campaignCols}>
                                            <TableCell>{r.end}</TableCell>
                                            <TableCell>{r.owner}</TableCell>
                                            <TableCell>
                                                {r.audience[0]}
                                                {r.audience[1] && <br />}
                                                {r.audience[1]}
                                            </TableCell>
                                            <TableCell>{r.leads}</TableCell>
                                            <TableCell $color={statusColors[r.status]}>{r.status}</TableCell>
                                            <Actions />
                                        </TableRow>
                                    ))}
                                </TableBox>
                            </WhiteFrame>

                            <FrameLabel $x={312} $y={135}>
                                Frame 748
                            </FrameLabel>
                            <FormCard $x={312} $y={154} $h={111}>
                                <PencilBadge>
                                    <PenMini />
                                </PencilBadge>
                                <FieldGrid>
                                    {fields.map(f => (
                                        <Field key={f.label}>
                                            <FieldLabel>{f.label}</FieldLabel>
                                            <FieldHint>{f.hint}</FieldHint>
                                            {f.dot && <FieldDot />}
                                        </Field>
                                    ))}
                                </FieldGrid>
                                <RedButton $gap={8}>Add Lead</RedButton>
                            </FormCard>

                            <Connector width="861" height="620">
                                <path d="M469 182L488 174M469 231L488 222" stroke="#333333" strokeWidth="0.8" fill="none" />
                            </Connector>

                            <FrameLabel $x={488} $y={144}>
                                Fram...
                            </FrameLabel>
                            <StatusBox $x={488} $y={161} $h={42} $red>
                                {['Planned', 'In Progress', 'Completed', 'On Hold'].map(s => (
                                    <StatusItem key={s} $color="#ffffff" $dot="#ffffff">
                                        {s}
                                    </StatusItem>
                                ))}
                            </StatusBox>
                            <StatusBox $x={488} $y={214} $h={41}>
                                {['Planned', 'In Progress', 'Completed', 'On Hold'].map(s => (
                                    <StatusItem key={s} $color={statusColors[s]} $dot="#1a8cff">
                                        {s}
                                    </StatusItem>
                                ))}
                            </StatusBox>
                            <FrameLabel $x={488} $y={197}>
                                Fram...
                            </FrameLabel>

                            <WhiteFrame $x={0} $y={382} $w={157} $h={192}>
                                <PinkBar $w={135}>
                                    <PersonAvatar />
                                </PinkBar>
                                <PlusRow $h={24} $pad={11}>
                                    <RedPlus>+</RedPlus>
                                </PlusRow>
                                <TableBox $right={7}>
                                    <TableRow $cols={leadCols} $head>
                                        <TableCell>Email</TableCell>
                                        <TableCell>Status</TableCell>
                                        <TableCell>Action</TableCell>
                                    </TableRow>
                                    {leadRows.map(r => (
                                        <TableRow key={r.email} $cols={leadCols}>
                                            <TableCell>{r.email}</TableCell>
                                            <TableCell $color={statusColors[r.status]}>{r.status}</TableCell>
                                            <Actions />
                                        </TableRow>
                                    ))}
                                </TableBox>
                            </WhiteFrame>

                            <ScrollThumbH />
                            <ScrollThumbV />
                        </Canvas>
                    </CanvasRow>
                </CenterArea>

                <RightPanel>
                    <PanelTabs>
                        Design
                        <PanelTabMuted>Prototype</PanelTabMuted>
                    </PanelTabs>
                    <PageSection>
                        <PageTitle>Page</PageTitle>
                        <FillRow>
                            <Swatch />
                            <HexValue>F5F5F5</HexValue>
                            <PercentValue>100%</PercentValue>
                            <EyeSlot>
                                <Eye size={15} strokeWidth={1.3} />
                            </EyeSlot>
                        </FillRow>
                    </PageSection>
                    <PanelSection>
                        Local variables
                        <PanelGlyph>
                            <SlidersGlyph />
                        </PanelGlyph>
                    </PanelSection>
                    <PanelSection>
                        Local styles
                        <PanelGlyph>
                            <Plus size={15} strokeWidth={1.1} />
                        </PanelGlyph>
                    </PanelSection>
                    <PanelSection>
                        Export
                        <PanelGlyph>
                            <Plus size={15} strokeWidth={1.1} />
                        </PanelGlyph>
                    </PanelSection>
                    <HelpButton>?</HelpButton>
                </RightPanel>
            </MainRow>

            <TaskBar>
                <StartButton>
                    <WindowsLogo />
                </StartButton>
                <SearchBox>
                    <MirroredSearch size={18} strokeWidth={1.2} />
                    Type here to search
                    <RocketArt />
                </SearchBox>
                <AppSlot $w={50}>
                    <EdgeIcon />
                </AppSlot>
                <AppSlot $w={49} $open>
                    <FolderIcon />
                </AppSlot>
                <AppSlot $w={49}>
                    <MailIcon />
                </AppSlot>
                <AppSlot $w={50} $open>
                    <ChromeIcon />
                </AppSlot>
                <AppSlot $w={48} $open $active>
                    <FigmaApp />
                </AppSlot>
                <AppSlot $w={48} $open>
                    <FaWhatsapp size={27} color="#25c04a" />
                    <CountBadge>1</CountBadge>
                </AppSlot>
                <AppSlot $w={49}>
                    <GithubBadge>
                        <GithubIcon />
                        <FaGithub size={14} />
                    </GithubBadge>
                </AppSlot>
                <AppSlot $w={49}>
                    <YoutubeIcon />
                </AppSlot>
                <Tray>
                    <TraySlot $w={32}>
                        <ChevronUp size={17} strokeWidth={1.2} />
                    </TraySlot>
                    <TraySlot $w={18}>
                        <CameraTray />
                    </TraySlot>
                    <TraySlot $w={30}>
                        <NetworkTray />
                    </TraySlot>
                    <TraySlot $w={16}>
                        <VolumeTray />
                    </TraySlot>
                    <TraySlot $w={44}>ENG</TraySlot>
                    <ClockBlock>
                        4:38 PM
                        <br />
                        10/4/2024
                    </ClockBlock>
                    <NotifySlot>
                        <NotifyIcon />
                        <NotifyCount>4</NotifyCount>
                    </NotifySlot>
                </Tray>
            </TaskBar>

            <ActivateNote>
                <ActivateTitle>Activate Windows</ActivateTitle>
                <ActivateText>Go to Settings to activate Windows.</ActivateText>
            </ActivateNote>
        </AppShell>
    );
};

export default App;
